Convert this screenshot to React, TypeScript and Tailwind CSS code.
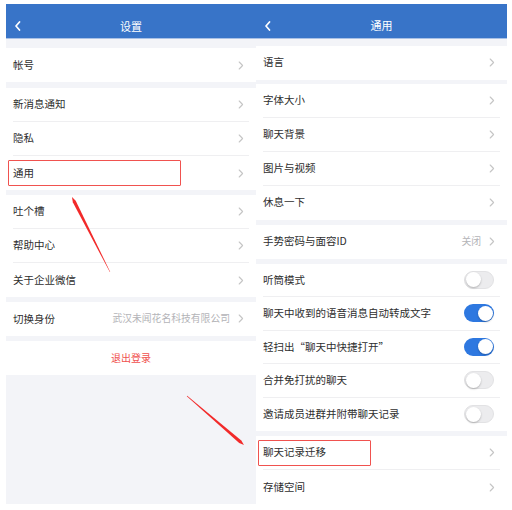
import React from 'react';

const font = { fontFamily: '"Noto Sans CJK SC", "Noto Sans", sans-serif' };

const Chevron = () => (
  <svg width="6" height="9" viewBox="0 0 6 9" className="shrink-0">
    <polyline points="1.2,1 4.6,4.5 1.2,8" fill="none" stroke="#c5c5c5" strokeWidth="1.1" strokeLinecap="round" strokeLinejoin="round" />
  </svg>
);

const Toggle = ({ on }: { on: boolean }) => (
  <div
    className={
      on
        ? 'flex h-[18px] w-[30px] items-center justify-end rounded-full bg-[#2e78e0] p-[1.5px]'
        : 'flex h-[18px] w-[30px] items-center justify-start rounded-full border border-[#e2e2e4] bg-[#ececee] p-[1px]'
    }
  >
    <div className="h-[15px] w-[15px] rounded-full bg-white shadow-[0_1px_2px_rgba(0,0,0,0.25)]" />
  </div>
);

type Item = { label: string; value?: string; toggle?: boolean; on?: boolean };

const Group = ({ items, h = 'h-[34px]' }: { items: Item[]; h?: string }) => (
  <div className="bg-white px-[7px]">
    {items.map((it, i) => (
      <div
        key={it.label}
        className={`flex ${h} items-center justify-between pr-[5px] ${i < items.length - 1 ? 'border-b border-[#efeff1]' : ''}`}
      >
        <span className="text-[10.5px] leading-none text-[#2e2e2e]">{it.label}</span>
        {it.toggle ? (
          <div className="mr-[1px]">
            <Toggle on={!!it.on} />
          </div>
        ) : (
          <div className="flex items-center gap-[8px]">
            {it.value && <span className="text-[9.8px] leading-none text-[#b4b4b8]">{it.value}</span>}
            <Chevron />
          </div>
        )}
      </div>
    ))}
  </div>
);

const Header = ({ title }: { title: string }) => (
  <div className="relative flex h-[34px] items-center justify-center bg-[#3874c8] pt-[10px]">
    <svg width="8" height="10" viewBox="0 0 8 10" className="absolute left-[8px] top-[17px]">
      <polyline points="5.5,1 2,5 5.5,9" fill="none" stroke="white" strokeWidth="1.7" strokeLinecap="round" strokeLinejoin="round" />
    </svg>
    <span className="text-[11px] leading-none text-white">{title}</span>
  </div>
);

const taper = (x1: number, y1: number, x2: number, y2: number, w: number) => {
  const dx = x2 - x1;
  const dy = y2 - y1;
  const len = Math.hypot(dx, dy);
  const nx = -dy / len;
  const ny = dx / len;
  const ux = dx / len;
  const uy = dy / len;
  const bx = x2 - ux * 5;
  const by = y2 - uy * 5;
  const pts = [
    [x1 + nx * 0.25, y1 + ny * 0.25],
    [bx + nx * w, by + ny * w],
    [x2, y2],
    [bx - nx * w, by - ny * w],
    [x1 - nx * 0.25, y1 - ny * 0.25],
  ];
  return pts.map((p) => p.map((v) => v.toFixed(1)).join(',')).join(' ');
};

export default function App() {
  return (
    <div className="relative h-[510px] w-[512px] overflow-hidden bg-white pl-[6px] pt-[4px]" style={font}>
      <div className="flex">
        {/* left: 设置 */}
        <div className="flex h-[500px] w-[250px] flex-col bg-[#f3f4f8]">
          <Header title="设置" />
          <div className="h-[10px] border-t border-[#a9c1e6]" />
          <Group items={[{ label: '帐号' }]} />
          <div className="h-[6px]" />
          <Group items={[{ label: '新消息通知' }, { label: '隐私' }, { label: '通用' }]} />
          <div className="h-[5px]" />
          <Group items={[{ label: '吐个槽' }, { label: '帮助中心' }, { label: '关于企业微信' }]} />
          <div className="h-[5px]" />
          <Group items={[{ label: '切换身份', value: '武汉未闻花名科技有限公司' }]} />
          <div className="h-[5px]" />
          <div className="flex h-[34px] items-center justify-center bg-white">
            <span className="text-[10px] leading-none text-[#f0504e]">退出登录</span>
          </div>
        </div>

        {/* right: 通用 */}
        <div className="flex h-[500px] w-[251px] flex-col overflow-hidden bg-[#f3f4f8]">
          <Header title="通用" />
          <div className="h-[8px] border-t border-[#a9c1e6]" />
          <Group items={[{ label: '语言' }]} />
          <div className="h-[4px]" />
          <Group items={[{ label: '字体大小' }, { label: '聊天背景' }, { label: '图片与视频' }, { label: '休息一下' }]} />
          <div className="h-[5px]" />
          <Group items={[{ label: '手势密码与面容ID', value: '关闭' }]} />
          <div className="h-[5px]" />
          <Group
            h="h-[33.5px]"
            items={[
              { label: '听筒模式', toggle: true },
              { label: '聊天中收到的语音消息自动转成文字', toggle: true, on: true },
              { label: '轻扫出“聊天中快捷打开”', toggle: true, on: true },
              { label: '合并免打扰的聊天', toggle: true },
              { label: '邀请成员进群并附带聊天记录', toggle: true },
            ]}
          />
          <div className="h-[5px]" />
          <Group items={[{ label: '聊天记录迁移' }, { label: '存储空间' }]} />
        </div>
      </div>

      {/* annotations */}
      <div className="absolute left-[8px] top-[160px] h-[26px] w-[173px] rounded-[1px] border-[1.5px] border-[#f0524f]" />
      <div className="absolute left-[258px] top-[440px] h-[26px] w-[113px] rounded-[1px] border-[1.5px] border-[#f0524f]" />
      <svg className="pointer-events-none absolute left-0 top-0" width="512" height="510">
        <polygon points={taper(110, 272, 72, 197, 1.6)} fill="#f22a2a" />
        <polygon points={taper(187, 396, 244, 445, 1.6)} fill="#f22a2a" />
      </svg>
    </div>
  );
}
